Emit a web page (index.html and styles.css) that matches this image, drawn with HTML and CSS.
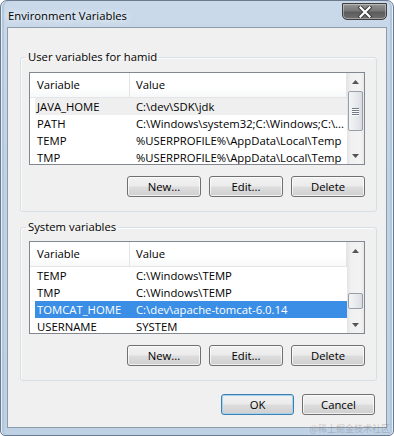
FILE: index.html
```html
<!DOCTYPE html>
<html>
<head>
<meta charset="utf-8">
<link rel="stylesheet" href="styles.css">
</head>
<body>
<div class="window">
  <div class="titlebar">
    <span class="title">Environment Variables</span>
    <div class="close">
      <svg width="16" height="12" viewBox="0 0 16 12"><path d="M3.5 1.5 L12.5 10.5 M12.5 1.5 L3.5 10.5" stroke="#3a3a3a" stroke-width="4" stroke-linecap="square"/><path d="M3.5 1.5 L12.5 10.5 M12.5 1.5 L3.5 10.5" stroke="#ffffff" stroke-width="2.2" stroke-linecap="square"/></svg>
    </div>
  </div>
  <div class="client">
    <fieldset class="group group1">
      <legend>User variables for hamid</legend>
      <div class="listbox">
        <div class="list">
          <div class="header"><div class="hcol c1">Variable</div><div class="hcol c2">Value</div></div>
          <div class="row inactive"><span class="c1">JAVA_HOME</span><span class="c2">C:\dev\SDK\jdk</span></div>
          <div class="row"><span class="c1">PATH</span><span class="c2">C:\Windows\system32;C:\Windows;C:\...</span></div>
          <div class="row"><span class="c1">TEMP</span><span class="c2">%USERPROFILE%\AppData\Local\Temp</span></div>
          <div class="row"><span class="c1">TMP</span><span class="c2">%USERPROFILE%\AppData\Local\Temp</span></div>
        </div>
        <div class="scrollbar">
          <div class="arrow"><svg width="7" height="4" viewBox="0 0 7 4"><path d="M0 4 L3.5 0 L7 4 Z" fill="#555"/></svg></div>
          <div class="track"><div class="thumb thumb-user"><span class="grip"></span><span class="grip"></span><span class="grip"></span><span class="grip"></span></div></div>
          <div class="arrow"><svg width="7" height="4" viewBox="0 0 7 4"><path d="M0 0 L7 0 L3.5 4 Z" fill="#555"/></svg></div>
        </div>
      </div>
      <div class="buttons">
        <button class="btn">New...</button>
        <button class="btn">Edit...</button>
        <button class="btn">Delete</button>
      </div>
    </fieldset>
    <fieldset class="group group2">
      <legend>System variables</legend>
      <div class="listbox">
        <div class="list">
          <div class="header"><div class="hcol c1">Variable</div><div class="hcol c2">Value</div></div>
          <div class="row"><span class="c1">TEMP</span><span class="c2">C:\Windows\TEMP</span></div>
          <div class="row"><span class="c1">TMP</span><span class="c2">C:\Windows\TEMP</span></div>
          <div class="row selected"><span class="c1">TOMCAT_HOME</span><span class="c2">C:\dev\apache-tomcat-6.0.14</span></div>
          <div class="row"><span class="c1">USERNAME</span><span class="c2">SYSTEM</span></div>
        </div>
        <div class="scrollbar">
          <div class="arrow"><svg width="7" height="4" viewBox="0 0 7 4"><path d="M0 4 L3.5 0 L7 4 Z" fill="#555"/></svg></div>
          <div class="track"><div class="thumb thumb-sys"></div></div>
          <div class="arrow"><svg width="7" height="4" viewBox="0 0 7 4"><path d="M0 0 L7 0 L3.5 4 Z" fill="#555"/></svg></div>
        </div>
      </div>
      <div class="buttons">
        <button class="btn">New...</button>
        <button class="btn">Edit...</button>
        <button class="btn">Delete</button>
      </div>
    </fieldset>
    <div class="dialog-buttons">
      <button class="btn default">OK</button>
      <button class="btn">Cancel</button>
    </div>
  </div>
  <div class="watermark">@稀土掘金技术社区</div>
</div>
</body>
</html>
```

FILE: styles.css
```css
* { box-sizing: border-box; }
html, body { margin: 0; padding: 0; background: #ffffff; }
body { font-family: "Open Sans", "Noto Sans", sans-serif; font-size: 11.3px; color: #000; }

.window {
  position: relative;
  width: 394px;
  height: 436px;
  border: 1px solid #6b7b8f;
  border-radius: 7px 7px 5px 5px;
  background: linear-gradient(180deg, #c9d9ea 0%, #c0d2e6 40%, #bfd1e5 100%);
  box-shadow: inset 1px 0 0 #e6eef7, inset -1px 0 0 #e6eef7, inset 3px 0 0 #b3c6dc, inset -3px 0 0 #b3c6dc;
  padding: 0 6px 7px 6px;
  display: flex;
  flex-direction: column;
  overflow: hidden;
}

.titlebar {
  height: 29px;
  display: flex;
  justify-content: space-between;
  align-items: flex-start;
}
.title {
  margin-top: 7px;
  margin-left: 1px;
  line-height: 16px;
  font-size: 11.3px;
  text-shadow: 0 0 6px #ffffff, 0 0 10px #ffffff;
}
.close {
  margin-top: 2px;
  width: 45px;
  height: 17px;
  border: 1px solid #3f3f3f;
  border-radius: 0 0 5px 5px;
  background: linear-gradient(180deg, #959595 0%, #777 45%, #5c5c5c 55%, #707070 100%);
  box-shadow: inset 0 0 0 1px rgba(255,255,255,0.35);
  display: flex;
  align-items: center;
  justify-content: center;
}

.client {
  flex: 1;
  background: #f0f0f0;
  border: 1px solid #8e9bab;
  padding: 21px 9px 12px 12px;
  display: flex;
  flex-direction: column;
}

.group {
  margin: 0;
  border: 1px solid #d5dfe5;
  border-radius: 3px;
  padding: 7px 11px 14px 8px;
  min-width: 0;
  box-shadow: inset 1px 1px 0 #fbfbfb;
}
.group legend {
  padding: 0 2px;
  margin-left: -3px;
  line-height: 16px;
  font-size: 11.3px;
}
.group2 { margin-top: 7px; padding-top: 6px; }

.listbox {
  height: 93px;
  border: 1px solid #828790;
  background: #fff;
  display: flex;
  overflow: hidden;
}
.list { flex: 1; min-width: 0; }
.header {
  height: 25px;
  display: flex;
  border-bottom: 1px solid #e5e5e5;
  background: linear-gradient(180deg, #ffffff 0%, #ffffff 60%, #f7f8f9 100%);
}
.hcol {
  line-height: 23px;
}
.header .c1 { width: 100px; padding-left: 7px; border-right: 1px solid #e5e5e5; }
.header .c2 { flex: 1; padding-left: 6px; border-right: 1px solid #e5e5e5; }

.row {
  height: 17px;
  line-height: 17px;
  display: flex;
  margin-left: 5px;
  white-space: nowrap;
}
.row .c1 { width: 95px; padding-left: 2px; }
.row .c2 { flex: 1; padding-left: 6px; overflow: hidden; }
.row.inactive { background: #efefef; }
.row.selected { background: #3a8ee6; color: #fff; }

.scrollbar {
  width: 17px;
  display: flex;
  flex-direction: column;
  background: linear-gradient(90deg, #e3e3e3 0%, #f0f0f0 20%, #f3f3f3 80%, #e8e8e8 100%);
}
.arrow {
  height: 17px;
  display: flex;
  align-items: center;
  justify-content: center;
  flex: none;
}
.track { flex: 1; display: flex; flex-direction: column; }
.thumb {
  margin: 0 1px;
  border: 1px solid #979fa9;
  border-radius: 2px;
  background: linear-gradient(90deg, #f3f4f6 0%, #e8ebee 50%, #d9dde2 100%);
  display: flex;
  flex-direction: column;
  align-items: center;
  justify-content: center;
  gap: 1px;
}
.thumb-user { margin-top: 1px; height: 40px; }
.thumb-sys { margin-top: 34px; height: 16px; }
.grip { width: 7px; height: 1px; background: #6f7a86; box-shadow: 0 1px 0 #fff; }

.buttons {
  display: flex;
  justify-content: flex-end;
  gap: 8px;
  margin-top: 11px;
}
.btn {
  width: 74px;
  height: 21px;
  padding: 0;
  font-family: "Open Sans", "Noto Sans", sans-serif;
  font-size: 11.3px;
  color: #000;
  border: 1px solid #707070;
  border-radius: 3px;
  background: linear-gradient(180deg, #f2f2f2 0%, #ebebeb 48%, #dddddd 52%, #cfcfcf 100%);
  box-shadow: inset 0 0 0 1px rgba(255,255,255,0.7);
}
.btn.default {
  border-color: #3c7fb1;
  box-shadow: inset 0 0 0 1px #a6d2f0;
}
.dialog-buttons {
  display: flex;
  justify-content: flex-end;
  gap: 8px;
  margin-top: 13px;
  margin-right: 2px;
}
.dialog-buttons .btn { width: 73px; }

.watermark {
  position: absolute;
  right: 3px;
  bottom: 1px;
  font-family: "Noto Sans CJK SC", sans-serif;
  font-size: 9px;
  line-height: 10px;
  color: rgba(110, 110, 110, 0.35);
}
```
